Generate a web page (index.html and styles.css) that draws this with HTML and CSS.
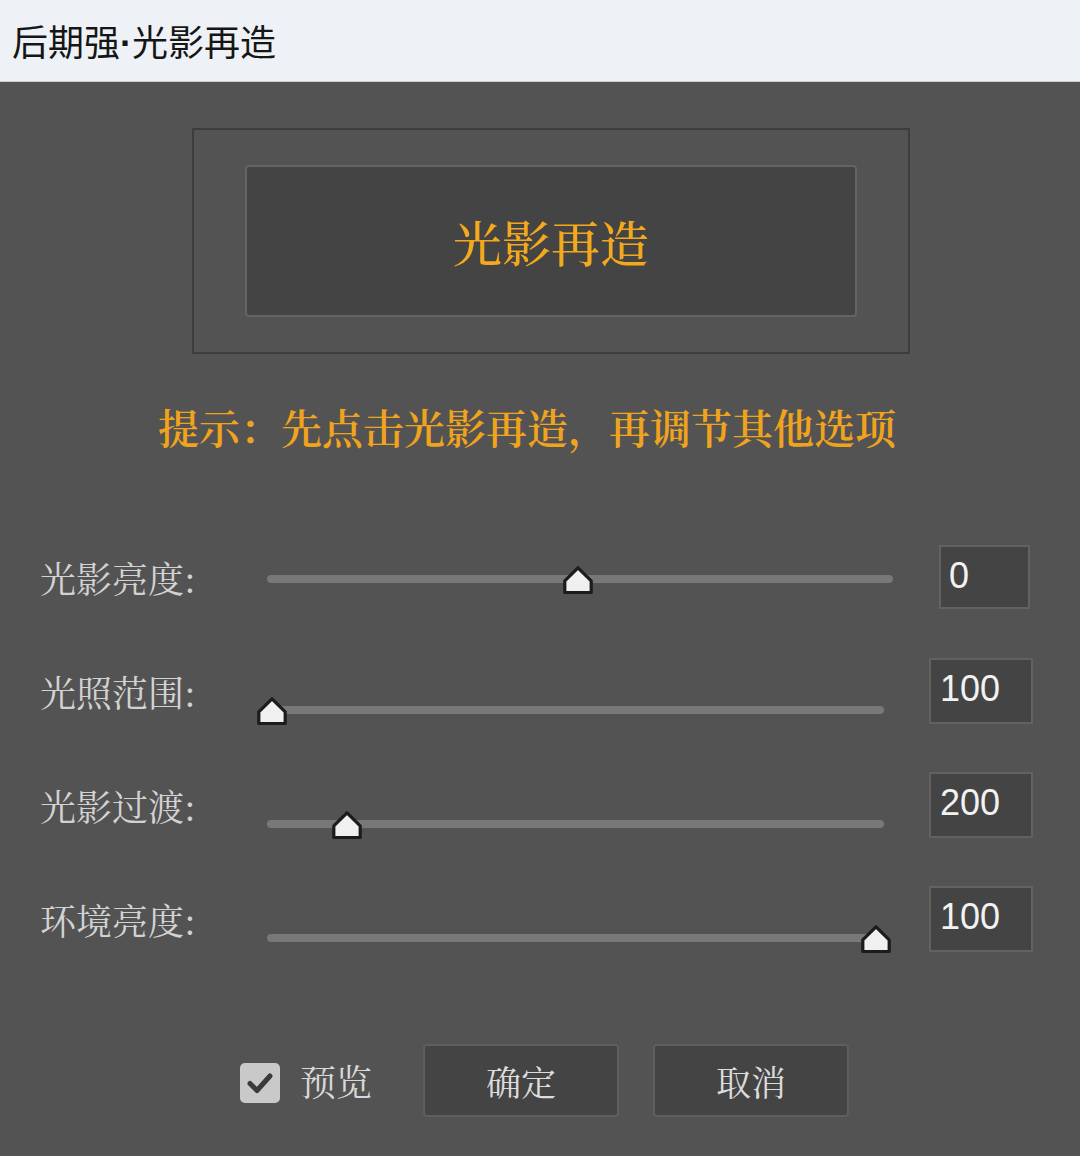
FILE: index.html
```html
<!DOCTYPE html>
<html lang="zh-CN">
<head>
<meta charset="utf-8">
<title>后期强·光影再造</title>
<link rel="stylesheet" href="styles.css">
</head>
<body>
<div class="titlebar">后期强<span class="dot">·</span>光影再造</div>
<main class="dialog">
  <div class="frame">
    <div class="bigbtn">光影再造</div>
  </div>
  <p class="hint">提示：先点击光影再造，再调节其他选项</p>

  <div class="rows">
    <div class="row first">
      <span class="label">光影亮度:</span>
      <div class="slider">
        <div class="track"></div>
        <svg class="thumb" style="left:296px" viewBox="0 0 30 28"><path d="M15 1.8 L28.2 14.8 V26.5 H1.8 V14.8 Z"/></svg>
      </div>
      <div class="value">0</div>
    </div>
    <div class="row">
      <span class="label">光照范围:</span>
      <div class="slider">
        <div class="track"></div>
        <svg class="thumb" style="left:-10px" viewBox="0 0 30 28"><path d="M15 1.8 L28.2 14.8 V26.5 H1.8 V14.8 Z"/></svg>
      </div>
      <div class="value">100</div>
    </div>
    <div class="row">
      <span class="label">光影过渡:</span>
      <div class="slider">
        <div class="track"></div>
        <svg class="thumb" style="left:65px" viewBox="0 0 30 28"><path d="M15 1.8 L28.2 14.8 V26.5 H1.8 V14.8 Z"/></svg>
      </div>
      <div class="value">200</div>
    </div>
    <div class="row">
      <span class="label">环境亮度:</span>
      <div class="slider">
        <div class="track"></div>
        <svg class="thumb" style="left:594px" viewBox="0 0 30 28"><path d="M15 1.8 L28.2 14.8 V26.5 H1.8 V14.8 Z"/></svg>
      </div>
      <div class="value">100</div>
    </div>
  </div>

  <div class="footer">
    <span class="check"><svg viewBox="0 0 40 40"><path d="M10 20.5 L17 27.5 L30 13"/></svg></span>
    <span class="check-label">预览</span>
    <div class="btn ok">确定</div>
    <div class="btn">取消</div>
  </div>
</main>
</body>
</html>
```

FILE: styles.css
```css
html, body {
  margin: 0;
  padding: 0;
  background: #535353;
}
body {
  width: 1080px;
  height: 1156px;
  overflow: hidden;
  font-family: "Noto Sans CJK SC", "Noto Sans", sans-serif;
}
.titlebar {
  border-bottom: 1px solid #c9cdd2;
  background: #eef2f6;
  color: #161616;
  font-size: 36px;
  line-height: 80px;
  padding-left: 12px;
  box-sizing: border-box;
  height: 82px;
}
.dot {
  font-family: "Liberation Sans", Arial, sans-serif;
  font-weight: bold;
}
.dialog {
  background: #535353;
  padding-top: 46px;
}
.frame {
  margin-left: 192px;
  width: 718px;
  height: 226px;
  box-sizing: border-box;
  border: 2px solid #3d3d3d;
  padding: 35px 51px;
}
.bigbtn {
  height: 152px;
  box-sizing: border-box;
  background: #444444;
  border: 2px solid #646464;
  border-radius: 4px;
  display: flex;
  align-items: center;
  justify-content: center;
  color: #f3a81d;
  font-size: 49px;
  font-weight: 500;
  font-family: "Noto Serif CJK SC", "Noto Sans CJK SC", serif;
}
.hint {
  margin: 48px 0 0 0;
  padding-left: 158px;
  font-size: 41px;
  line-height: 49px;
  color: #f0a31c;
  font-family: "Noto Serif CJK SC", "Noto Sans CJK SC", serif;
  font-weight: 600;
}
.rows {
  margin-top: 69px;
}
.row {
  display: flex;
  align-items: center;
  height: 114px;
  padding-left: 40px;
}
.label {
  width: 227px;
  flex: none;
  font-size: 36px;
  color: #d2d2d2;
  font-family: "Noto Serif CJK SC", "Noto Sans CJK SC", serif;
}
.slider {
  position: relative;
  width: 617px;
  height: 40px;
  margin-top: 38px;
  flex: none;
}
.row.first .slider {
  width: 626px;
  margin-top: 4px;
}
.track {
  position: absolute;
  left: 0;
  right: 0;
  top: 16px;
  height: 8px;
  border-radius: 4px;
  background: #787878;
}
.thumb {
  position: absolute;
  top: 7px;
  width: 30px;
  height: 28px;
  overflow: visible;
}
.thumb path {
  fill: #f0f0f0;
  stroke: #1c1c1c;
  stroke-width: 3.2;
  stroke-linejoin: round;
}
.value {
  margin-left: 45px;
  width: 104px;
  height: 66px;
  box-sizing: border-box;
  background: #444444;
  border: 2px solid #626262;
  color: #f2f2f2;
  font-family: "Liberation Sans", Arial, sans-serif;
  font-size: 36px;
  line-height: 1;
  padding: 11px 0 0 9px;
  flex: none;
}
.row.first .value {
  margin-left: 46px;
  width: 91px;
  height: 64px;
  padding-left: 8px;
}
.footer {
  margin-top: 68px;
  display: flex;
  align-items: center;
  padding-left: 240px;
  height: 73px;
}
.check {
  width: 40px;
  height: 40px;
  border-radius: 5px;
  background: #c9c9c9;
  display: block;
  flex: none;
  margin-top: 4px;
}
.check svg {
  width: 40px;
  height: 40px;
  display: block;
}
.check path {
  fill: none;
  stroke: #3a3a3a;
  stroke-width: 5;
  stroke-linecap: round;
  stroke-linejoin: round;
}
.check-label {
  margin-left: 20px;
  font-size: 36px;
  color: #d8d8d8;
  width: 72px;
  font-family: "Noto Serif CJK SC", "Noto Sans CJK SC", serif;
}
.btn {
  width: 196px;
  height: 73px;
  box-sizing: border-box;
  background: #444444;
  border: 2px solid #5e5e5e;
  border-radius: 4px;
  display: flex;
  align-items: center;
  justify-content: center;
  font-size: 35px;
  color: #dcdcdc;
  font-family: "Noto Serif CJK SC", "Noto Sans CJK SC", serif;
  margin-left: 34px;
  flex: none;
}
.btn.ok {
  margin-left: 51px;
}
```
